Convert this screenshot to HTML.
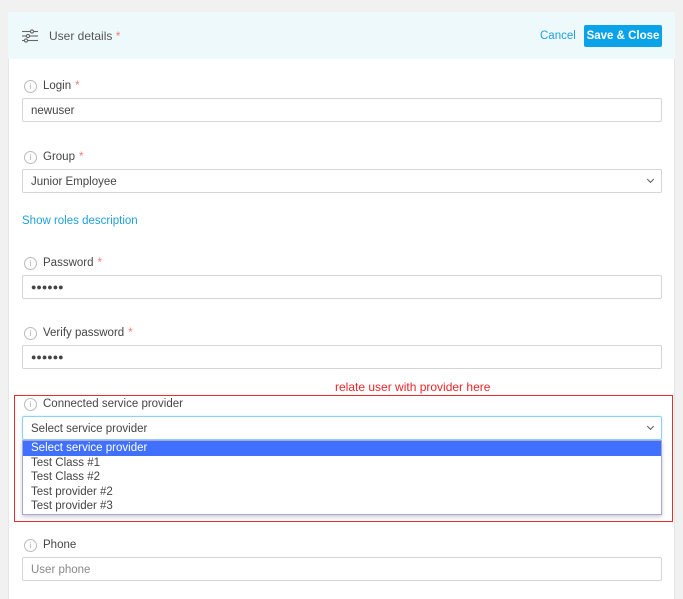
<!DOCTYPE html>
<html><head><style>
*{box-sizing:border-box;margin:0;padding:0}
html,body{width:683px;height:599px;overflow:hidden}
body{background:#f1f1f1;font-family:"Liberation Sans",sans-serif;font-size:11.5px;color:#444;position:relative}
.card{position:absolute;left:8px;top:12px;width:667px;height:600px;background:#fff;border:1px solid #e6e6e6}
.hdr{position:absolute;left:8px;top:12px;width:667px;height:47px;background:#eef9fc}
.a{position:absolute}
.lbl{position:absolute;left:24px;font-size:11.5px;color:#444;line-height:14px;display:flex;align-items:center}
.lbl i{display:inline-block;width:13px;height:13px;border:1px solid #bbb;border-radius:50%;font-style:normal;font-size:8px;color:#aaa;text-align:center;line-height:11px;margin-right:6px}
.lbl b{color:#f07b7b;font-weight:normal;margin-left:4px}
.inp{position:absolute;left:22px;width:640px;height:24px;border:1px solid #d5d5d5;border-radius:2px;padding-left:8px;padding-top:6px;line-height:12px;font-size:11.5px;color:#444}
.chev{position:absolute;right:8px;top:7px;width:5px;height:5px;border-right:1.3px solid #555;border-bottom:1.3px solid #555;transform:rotate(45deg)}
.dd div{height:14.6px;line-height:15px;padding-left:8px}
</style></head><body>
<div class="card"></div>
<div class="hdr"></div>
<svg class="a" style="left:22px;top:29px" width="16" height="14" viewBox="0 0 16 14" fill="none" stroke="#666" stroke-width="1.1"><line x1="0" y1="2.5" x2="16" y2="2.5"/><line x1="0" y1="7" x2="16" y2="7"/><line x1="0" y1="11.5" x2="16" y2="11.5"/><circle cx="10" cy="2.5" r="1.6" fill="#eef9fc"/><circle cx="6" cy="7" r="1.6" fill="#eef9fc"/><circle cx="4" cy="11.5" r="1.6" fill="#eef9fc"/></svg>
<div class="a" style="left:49px;top:29px;font-size:12px;color:#555">User details <span style="color:#f07b7b">*</span></div>
<div class="a" style="left:540px;top:30px;font-size:11.5px;color:#1e9fdc">Cancel</div>
<div class="a" style="left:584px;top:25px;width:78px;height:22px;background:#0aa3ea;border-radius:2px;color:#fff;font-size:11.5px;font-weight:bold;text-align:center;line-height:22px">Save &amp; Close</div>

<div class="lbl" style="top:79px"><i>i</i>Login<b>*</b></div>
<div class="inp" style="top:98px">newuser</div>
<div class="lbl" style="top:150px"><i>i</i>Group<b>*</b></div>
<div class="inp" style="top:169px">Junior Employee<span class="chev"></span></div>
<div class="a" style="left:22px;top:215px;color:#1e9fdc">Show roles description</div>
<div class="lbl" style="top:256px"><i>i</i>Password<b>*</b></div>
<div class="inp" style="top:275px;font-size:9px;padding-top:5px">●●●●●●</div>
<div class="lbl" style="top:326px"><i>i</i>Verify password<b>*</b></div>
<div class="inp" style="top:345px;font-size:9px;padding-top:5px">●●●●●●</div>

<div class="a" style="left:335px;top:380px;color:#e8262a;font-size:12px">relate user with provider here</div>
<div class="a" style="left:14px;top:395px;width:659px;height:127px;border:1.5px solid #ee2b2b"></div>
<div class="lbl" style="top:397px"><i>i</i>Connected service provider</div>
<div class="inp" style="top:416px;border-color:#8fd3f2;box-shadow:0 0 2px #bfe7f8">Select service provider<span class="chev"></span></div>
<div class="a dd" style="left:22px;top:440px;width:640px;height:75px;border:1px solid #a6a6d8;background:#fff;box-shadow:0 2px 4px rgba(0,0,0,.2);color:#444">
<div style="background:#4070ff;color:#fff">Select service provider</div>
<div>Test Class #1</div><div>Test Class #2</div><div>Test provider #2</div><div>Test provider #3</div>
</div>
<div class="lbl" style="top:538px"><i>i</i>Phone</div>
<div class="inp" style="top:557px;color:#888">User phone</div>
</body></html>
